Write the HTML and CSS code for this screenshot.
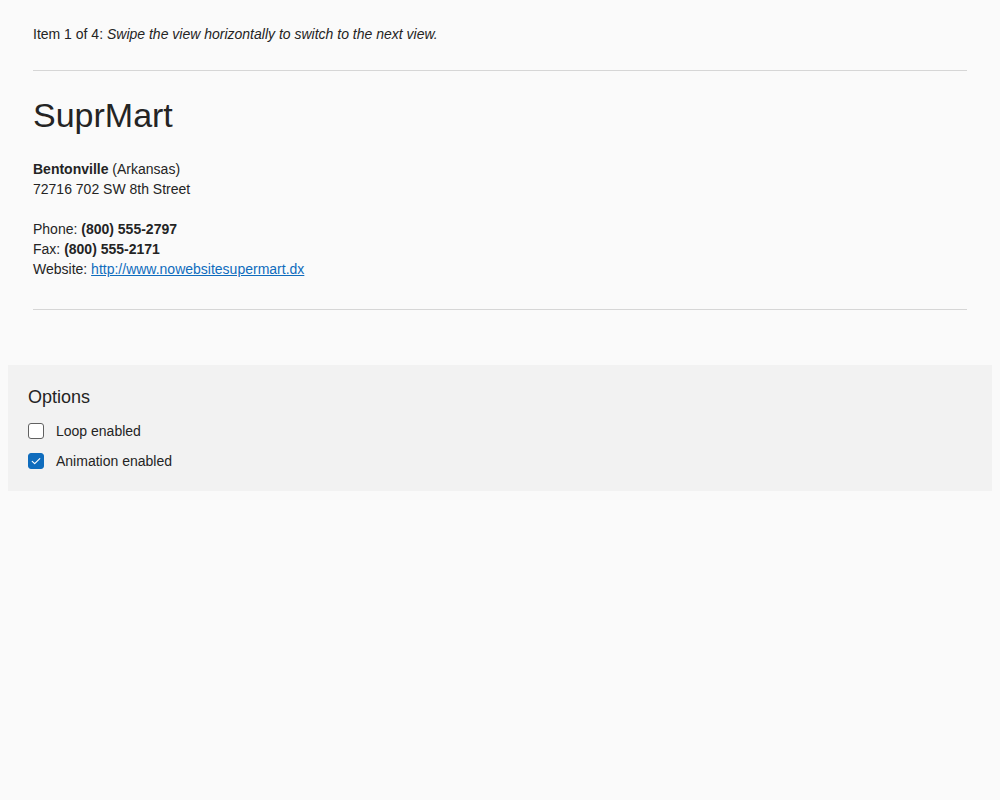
FILE: index.html
```html
<!DOCTYPE html>
<html lang="en">
<head>
<meta charset="utf-8">
<title>SuprMart</title>
<link rel="stylesheet" href="styles.css">
</head>
<body>
<div class="demo">
  <div class="item-info">Item 1 of 4: <i>Swipe the view horizontally to switch to the next view.</i></div>
  <div class="view">
    <h1 class="name">SuprMart</h1>
    <p class="address"><b>Bentonville</b> (Arkansas)<br>72716 702 SW 8th Street</p>
    <p class="contacts">Phone: <b>(800) 555-2797</b><br>Fax: <b>(800) 555-2171</b><br>Website: <a href="#">http://www.nowebsitesupermart.dx</a></p>
  </div>
</div>
<div class="options">
  <div class="caption">Options</div>
  <label class="option">
    <span class="check"></span>
    <span>Loop enabled</span>
  </label>
  <label class="option">
    <span class="check checked"><svg width="16" height="16" viewBox="0 0 16 16"><path d="M4.2 8.3 L6.7 10.7 L11.8 5.6" fill="none" stroke="#fff" stroke-width="1.1" stroke-linecap="round" stroke-linejoin="round"/></svg></span>
    <span>Animation enabled</span>
  </label>
</div>
</body>
</html>
```
FILE: styles.css
```css
html, body {
  background: #fafafa;
}
body {
  margin: 8px;
  font-family: "Liberation Sans", Arial, sans-serif;
  font-size: 14px;
  line-height: 20px;
  color: #242424;
}
.demo {
  padding: 0 25px;
  height: 357px;
}
.item-info {
  padding-top: 16px;
  padding-bottom: 26px;
  border-bottom: 1px solid #d6d6d6;
}
.view {
  border-bottom: 1px solid #d6d6d6;
  padding-bottom: 30px;
}
.name {
  margin: 24px 0 24px;
  font-size: 34px;
  line-height: 40px;
  font-weight: normal;
}
.address, .contacts {
  margin: 0;
}
.address {
  margin-bottom: 20px;
}
.contacts a {
  color: #0f6cbd;
}
.options {
  background: #f2f2f2;
  padding: 20px;
}
.caption {
  font-size: 18px;
  line-height: 24px;
}
.option {
  display: flex;
  align-items: center;
  gap: 12px;
  height: 20px;
  margin-top: 10px;
}
.caption + .option {
  margin-top: 12px;
}
.check {
  box-sizing: border-box;
  width: 16px;
  height: 16px;
  border: 1px solid #616161;
  border-radius: 3px;
  background: #fff;
  display: flex;
}
.check.checked {
  background: #0f6cbd;
  border-color: #0f6cbd;
}
.check svg {
  margin: -1px;
}
```
